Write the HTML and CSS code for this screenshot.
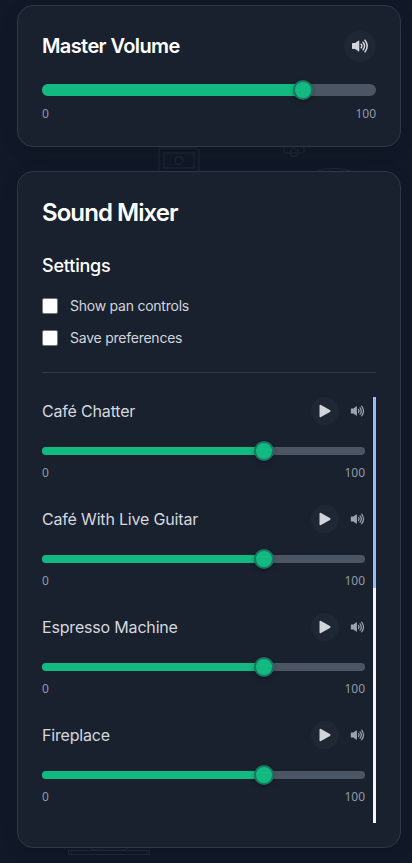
FILE: index.html
```html
<!DOCTYPE html>
<html lang="en">
<head>
<meta charset="utf-8">
<meta name="viewport" content="width=device-width, initial-scale=1">
<title>Sound Mixer</title>
<link rel="stylesheet" href="styles.css">
</head>
<body>
<svg class="backdrop" width="412" height="863" viewBox="0 0 412 863" fill="none" stroke="#212938" aria-hidden="true">
  <rect x="159" y="148" width="40" height="32" rx="3"/>
  <rect x="164" y="153" width="30" height="15"/>
  <circle cx="179" cy="160.500" r="4"/>
  <path d="M284 140v11q0 2 2 2h16q2 0 2-2v-11"/>
  <circle cx="294" cy="152.500" r="4"/>
  <path d="M317 171q17-5 34 0M357 170v1"/>
  <path d="M88 847q3 3 10 3h22q7 0 10-3"/>
  <path d="M68.500 850.500h81v4h-81zM71 851v3M147 851v3"/>
</svg>
<svg class="defs" width="0" height="0" aria-hidden="true">
  <symbol id="speaker" viewBox="0 0 18 16">
    <path fill="currentColor" d="M1.700 5h2.400L7.300 2.700q1-.7 1 .5v9.600q0 1.200-1 .5L4.100 11H1.700q-.7 0-.7-.7V5.700q0-.7.700-.7z"/>
    <path fill="none" stroke="currentColor" stroke-width="1.500" stroke-linecap="round" d="M10.200 6.200q1.300 1.800 0 3.600M12.100 4.200q2.900 3.800 0 7.600M14 2.200q4.400 5.800 0 11.600"/>
  </symbol>
  <symbol id="play" viewBox="0 0 12 14">
    <path fill="currentColor" d="M.5 1.800Q.5.200 2 .9l8.900 5.200q1.300.9 0 1.800L2 13.100q-1.500.7-1.500-.9z"/>
  </symbol>
</svg>
<main class="page">
  <section class="card master">
    <div class="master-head">
      <h2 class="master-title">Master Volume</h2>
      <button class="round large" aria-label="Mute"><svg class="master-icon"><use href="#speaker"/></svg></button>
    </div>
    <div class="slider thick"><div class="fill"></div><div class="thumb"></div></div>
    <div class="scale"><span>0</span><span>100</span></div>
  </section>
  <section class="card mixer">
    <h1 class="title">Sound Mixer</h1>
    <h2 class="subtitle">Settings</h2>
    <div class="settings">
      <label class="option"><input type="checkbox" class="check"><span>Show pan controls</span></label>
      <label class="option"><input type="checkbox" class="check"><span>Save preferences</span></label>
    </div>
    <div class="tracks">
      <div class="list">
        <article class="track">
          <div class="track-head"><h3 class="name">Café Chatter</h3><button class="round" aria-label="Play"><svg class="play-icon"><use href="#play"/></svg></button><svg class="volume-icon"><use href="#speaker"/></svg></div>
          <div class="slider"><div class="fill"></div><div class="thumb"></div></div>
          <div class="scale"><span>0</span><span>100</span></div>
        </article>
        <article class="track">
          <div class="track-head"><h3 class="name">Café With Live Guitar</h3><button class="round" aria-label="Play"><svg class="play-icon"><use href="#play"/></svg></button><svg class="volume-icon"><use href="#speaker"/></svg></div>
          <div class="slider"><div class="fill"></div><div class="thumb"></div></div>
          <div class="scale"><span>0</span><span>100</span></div>
        </article>
        <article class="track">
          <div class="track-head"><h3 class="name">Espresso Machine</h3><button class="round" aria-label="Play"><svg class="play-icon"><use href="#play"/></svg></button><svg class="volume-icon"><use href="#speaker"/></svg></div>
          <div class="slider"><div class="fill"></div><div class="thumb"></div></div>
          <div class="scale"><span>0</span><span>100</span></div>
        </article>
        <article class="track">
          <div class="track-head"><h3 class="name">Fireplace</h3><button class="round" aria-label="Play"><svg class="play-icon"><use href="#play"/></svg></button><svg class="volume-icon"><use href="#speaker"/></svg></div>
          <div class="slider"><div class="fill"></div><div class="thumb"></div></div>
          <div class="scale"><span>0</span><span>100</span></div>
        </article>
      </div>
      <div class="scrollbar"><div class="scroll-thumb"></div></div>
    </div>
  </section>
</main>
</body>
</html>
```
FILE: styles.css
```css
* { box-sizing: border-box; }
body {
  margin: 0;
  height: 863px;
  overflow: hidden;
  background: #111827;
  color: #fff;
  font-family: Inter, "Liberation Sans", sans-serif;
}
h1, h2, h3 { margin: 0; }
.backdrop { position: absolute; top: 0; left: 0; z-index: -1; }
.defs { position: absolute; }
.page {
  display: flex;
  flex-direction: column;
  gap: 24px;
  padding: 5px 11px 0 17px;
}
.card {
  background: #19212f;
  border: 1px solid #303846;
  border-radius: 16px;
  box-shadow: 0 4px 18px rgba(0, 0, 0, .1);
  padding: 24px;
}
.master { height: 142px; }
.mixer { height: 677px; }
.master-head { display: flex; align-items: center; justify-content: space-between; height: 32px; }
.master-title { font-size: 20px; font-weight: 600; line-height: 28px; letter-spacing: -.6px; }
.round {
  display: flex;
  align-items: center;
  justify-content: center;
  width: 28px;
  height: 28px;
  padding: 0;
  border: 0;
  border-radius: 50%;
  background: #1f2735;
  color: #d1d5db;
}
.large { width: 32px; height: 32px; }
.master-icon { width: 18px; height: 16px; }
.slider {
  display: flex;
  align-items: center;
  height: 8px;
  margin-top: 22px;
  border-radius: 6px;
  background: #4b5563;
}
.thick { height: 12px; }
.fill { width: calc(68.750% - 8px); height: 100%; border-radius: 6px 0 0 6px; background: #12b981; }
.thick .fill { width: calc(78% - 8px); }
.thumb {
  width: 20px;
  height: 20px;
  margin-left: -2px;
  border: 2px solid #1b765f;
  border-radius: 50%;
  background: #12b981;
  box-shadow: 0 2px 4px rgba(0, 0, 0, .25);
}
.scale {
  display: flex;
  justify-content: space-between;
  margin-top: 10px;
  font: 12px/16px "Noto Sans", sans-serif;
  color: #9199a6;
}
.title { font-size: 24px; font-weight: 600; line-height: 34px; letter-spacing: -.93px; }
.subtitle { margin-top: 22px; font-size: 18px; font-weight: 500; line-height: 28px; letter-spacing: -.2px; }
.settings {
  display: flex;
  flex-direction: column;
  gap: 12px;
  padding: 16px 0 24px;
  border-bottom: 1px solid #303a47;
}
.option { display: flex; align-items: center; gap: 12px; height: 20px; font-size: 14px; line-height: 20px; letter-spacing: -.24px; color: #d1d5db; }
.check { appearance: none; width: 16px; height: 16px; margin: 0; border: 1px solid #767676; border-radius: 2px; background: #fff; }
.tracks { display: flex; justify-content: space-between; height: 426px; margin-top: 24px; }
.list { display: flex; flex-direction: column; gap: 24px; width: 323px; }
.track { height: 84px; }
.track-head { display: flex; align-items: center; height: 28px; }
.name { flex: 1; font-size: 16px; font-weight: 400; color: #d5d8de; letter-spacing: -.18px; }
.play-icon { width: 12px; height: 14px; }
.volume-icon { width: 15px; height: 14px; margin-left: 11px; color: #9ca3af; }
.scrollbar { width: 3px; background: #f5f7f7; }
.scroll-thumb { height: 191px; background: #94bdfd; }
```
